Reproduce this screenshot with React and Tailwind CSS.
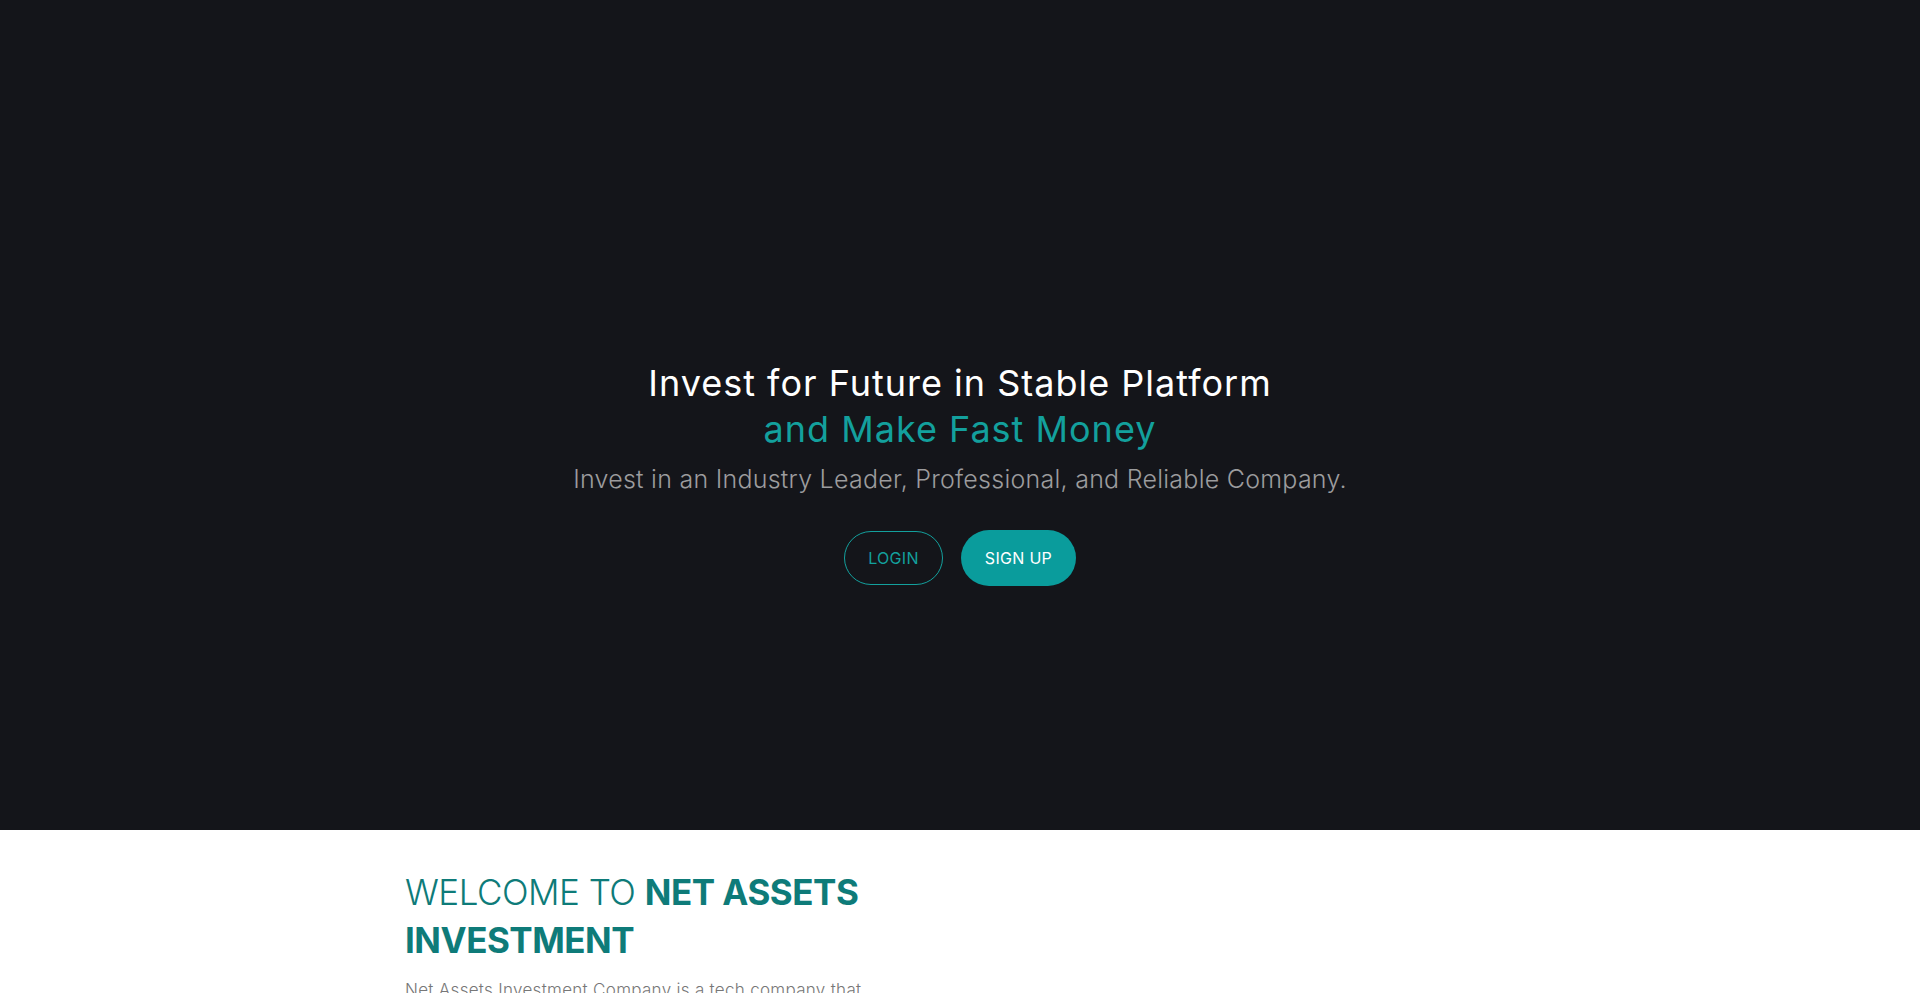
export default function App() {
  return (
    <div className="min-h-screen bg-white font-['Inter',sans-serif]">
      <section className="h-[830px] bg-[#14151a] flex flex-col items-center pt-[360px] text-center">
        <h1 className="text-[36px] leading-[46px] text-white font-normal tracking-[1px]">
          Invest for Future in Stable Platform
          <span className="block text-[#13a09d]">and Make Fast Money</span>
        </h1>
        <p className="mt-[9px] text-[25px] leading-[36px] font-light text-[#9c9c9e] tracking-[0.25px]">
          Invest in an Industry Leader, Professional, and Reliable Company.
        </p>
        <div className="mt-[33px] flex items-center gap-[18px]">
          <button className="h-[54px] w-[99px] rounded-full border border-[#13a09d] text-[#13a09d] text-[16px] font-normal tracking-[0.3px]">
            LOGIN
          </button>
          <button className="h-[56px] w-[115px] rounded-full bg-[#0a9c9c] text-white text-[16px] font-normal tracking-[0.3px]">
            SIGN UP
          </button>
        </div>
      </section>
      <section className="w-[1140px] mx-auto px-[15px] pt-[38px]">
        <div className="w-[462px]">
          <h2 className="text-[35px] leading-[48px] text-[#0e7b79] uppercase tracking-[-0.5px]">
            <span className="font-light">Welcome to </span>
            <span className="font-bold">Net Assets Investment</span>
          </h2>
          <p className="mt-[12px] text-[17px] leading-[28px] text-[#777777] font-light tracking-[0.3px]">
            Net Assets Investment Company is a tech company that offers a range of investment services to clients worldwide.
          </p>
        </div>
      </section>
    </div>
  );
}
